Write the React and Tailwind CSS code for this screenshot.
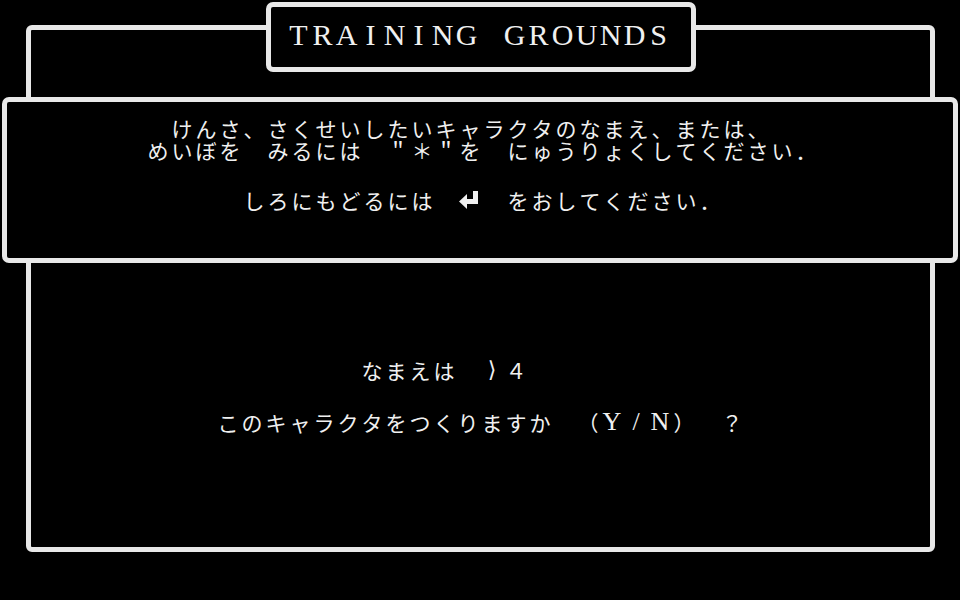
import React from 'react';

// Every character sits in a fixed 24px cell, like a text-mode screen.
const SERIF = 'YN/';

function ReturnKey() {
  return (
    <svg width="24" height="22" viewBox="0 0 24 22" className="inline-block">
      <rect x="15" y="2" width="5" height="13" fill="#f0f0f0" />
      <rect x="8" y="10" width="12" height="5" fill="#f0f0f0" />
      <polygon points="1,12.5 9,5 9,20" fill="#f0f0f0" />
    </svg>
  );
}

function Cell({ c }) {
  if (c === '↵') return <ReturnKey />;
  if (SERIF.includes(c))
    return <span className="font-['Liberation_Serif',serif] text-[26px] leading-[22px]">{c}</span>;
  if (c === '>')
    return <span className="font-['DejaVu_Sans',sans-serif] text-[22px] leading-[22px]">{'\u27E9'}</span>;
  return c;
}

function Cells({ text, className = '' }) {
  return (
    <div className={`flex h-[22px] items-center leading-[22px] ${className}`}>
      {[...text].map((c, i) => (
        <span key={i} className="flex h-[22px] w-[24px] shrink-0 items-center justify-center">
          <Cell c={c} />
        </span>
      ))}
    </div>
  );
}

function Title({ text }) {
  return (
    <div className="flex font-['Liberation_Serif',serif] text-[30px] leading-[30px] text-[#f0f0f0]">
      {[...text].map((c, i) => (
        <span key={i} className="w-[24px] shrink-0 text-center">
          {c}
        </span>
      ))}
    </div>
  );
}

export default function App() {
  return (
    <div className="h-[600px] w-[960px] overflow-hidden bg-black pt-[25px] pl-[26px] font-['Noto_Sans_CJK_JP','Noto_Sans',sans-serif] text-[21px] text-[#f0f0f0]">
      {/* outer frame */}
      <div className="flex h-[527px] w-[909px] flex-col rounded-[6px] border-[5px] border-[#e8e8e8]">
        {/* title plate, sits on the frame's top edge */}
        <div className="-mt-[28px] flex h-[70px] w-[430px] items-center self-center rounded-[7px] border-[5px] border-[#e8e8e8] bg-black pb-[4px] pl-[16px]">
          <Title text="TRAINING GROUNDS" />
        </div>

        {/* message panel, wider than the frame */}
        <div className="mt-[25px] -ml-[29px] h-[166px] w-[956px] rounded-[7px] border-[5px] border-[#e8e8e8] bg-black pt-[15px]">
          <Cells className="ml-[163px]" text="けんさ、さくせいしたいキャラクタのなまえ、または、" />
          <Cells className="ml-[139px]" text="めいぼを　みるには　＂＊＂を　にゅうりょくしてください．" />
          <Cells className="mt-[28px] ml-[235px]" text="しろにもどるには　↵　をおしてください．" />
        </div>

        {/* prompt */}
        <Cells className="mt-[96px] ml-[329px]" text="なまえは　>４" />
        <Cells className="mt-[30px] ml-[185px]" text="このキャラクタをつくりますか　（Y/N）　？" />
      </div>
    </div>
  );
}
